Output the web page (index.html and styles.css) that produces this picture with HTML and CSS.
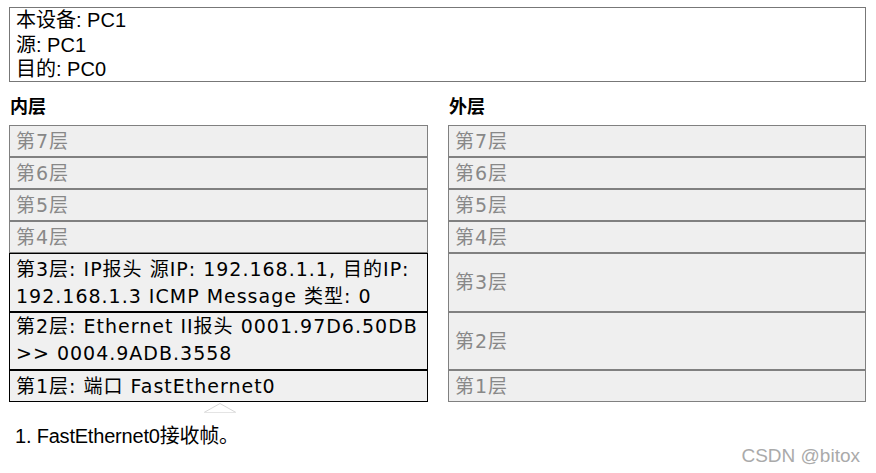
FILE: index.html
```html
<!DOCTYPE html>
<html>
<head>
<meta charset="utf-8">
<link rel="stylesheet" href="styles.css">
</head>
<body>
<div class="page">
  <div class="info">
    <div>本设备: PC1</div>
    <div>源: PC1</div>
    <div>目的: PC0</div>
  </div>
  <div class="layers">
    <div class="head">内层</div>
    <div class="head">外层</div>

    <div class="cell off">第7层</div>
    <div class="cell off">第7层</div>
    <div class="cell off">第6层</div>
    <div class="cell off">第6层</div>
    <div class="cell off">第5层</div>
    <div class="cell off">第5层</div>
    <div class="cell off">第4层</div>
    <div class="cell off">第4层</div>

    <div class="cell on l3">第3层: IP报头 源IP: 192.168.1.1, 目的IP: 192.168.1.3 ICMP Message 类型: 0</div>
    <div class="cell off">第3层</div>
    <div class="cell on l2">第2层: Ethernet II报头 0001.97D6.50DB &gt;&gt; 0004.9ADB.3558</div>
    <div class="cell off">第2层</div>
    <div class="cell on">第1层: 端口 FastEthernet0</div>
    <div class="cell off">第1层</div>
  </div>
  <div class="arrow-row">
    <svg class="arrow" width="34" height="11" viewBox="0 0 34 11"><polyline points="1,10.5 17,1.5 33,10.5" fill="none" stroke="#d6d6d6" stroke-width="1"/><line x1="1" y1="10.5" x2="33" y2="10.5" stroke="#e4e4e4" stroke-width="1"/></svg>
  </div>
  <ol class="steps">
    <li>1. FastEthernet0接收帧。</li>
  </ol>
  <div class="mark">CSDN @bitox</div>
</div>
</body>
</html>
```
FILE: styles.css
```css
html, body {
  margin: 0;
  padding: 0;
  background: #ffffff;
}
.page {
  width: 876px;
  height: 473px;
  padding: 7px 10px 0 9px;
  box-sizing: border-box;
  font-family: "DejaVu Sans", "Noto Sans CJK SC", sans-serif;
  color: #000;
  position: relative;
}
.info {
  border: 1px solid #777;
  height: 75px;
  box-sizing: border-box;
  padding: 0 6px;
  font-family: "Liberation Sans", "Noto Sans CJK SC", sans-serif;
  font-size: 20px;
  line-height: 24.5px;
}
.layers {
  display: grid;
  grid-template-columns: 419px 418px;
  column-gap: 20px;
  margin-top: 10px;
}
.head {
  font-family: "Liberation Sans", "Noto Sans CJK SC", sans-serif;
  font-weight: bold;
  font-size: 18px;
  line-height: 24px;
  height: 33px;
  box-sizing: border-box;
  padding: 3px 0 0 1px;
}
.cell {
  border: 1px solid #808080;
  background: #efefef;
  box-sizing: border-box;
  min-height: 32px;
  padding: 0 6px;
  font-size: 19px;
  letter-spacing: 1px;
  line-height: 27px;
  display: flex;
  align-items: center;
}
.cell.off {
  color: #888;
}
.cell.on {
  border-color: #000;
  background: #f0f0f0;
  color: #000;
}
.cell.l3 {
  min-height: 59px;
  align-items: flex-start;
  padding-top: 2px;
}
.cell.l2 {
  min-height: 58px;
  align-items: flex-start;
}
.arrow-row {
  height: 12px;
  padding-left: 194px;
}
.arrow {
  display: block;
}
.steps {
  list-style: none;
  margin: 10px 0 0 0;
  padding: 0 0 0 6px;
  font-family: "Liberation Sans", "Noto Sans CJK SC", sans-serif;
  font-size: 20px;
  letter-spacing: -0.2px;
  line-height: 24px;
}
.mark {
  text-align: right;
  font-family: "Liberation Sans", sans-serif;
  font-size: 19px;
  color: #aaa;
  margin-top: -3px;
  padding-right: 6px;
}
```
